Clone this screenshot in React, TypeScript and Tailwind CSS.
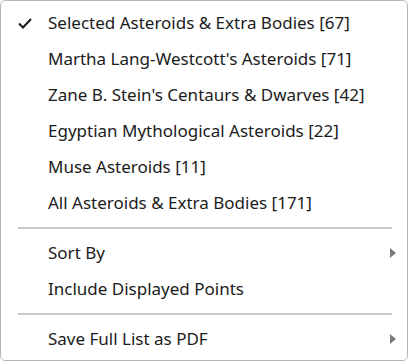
import React from 'react'

const items = [
  'Selected Asteroids & Extra Bodies [67]',
  "Martha Lang-Westcott's Asteroids [71]",
  "Zane B. Stein's Centaurs & Dwarves [42]",
  'Egyptian Mythological Asteroids [22]',
  'Muse Asteroids [11]',
  'All Asteroids & Extra Bodies [171]',
]

const Check = () => (
  <svg width="16" height="16" viewBox="0 0 16 16" className="text-[#1b1b1b]">
    <path d="M2 8.5 L6 12.5 L14 4" fill="none" stroke="currentColor" strokeWidth="2" />
  </svg>
)

const Arrow = () => (
  <svg width="6" height="10" viewBox="0 0 6 10">
    <path d="M0 0 L6 5 L0 10 Z" fill="#7a7a7a" />
  </svg>
)

interface RowProps {
  label: string
  checked?: boolean
  submenu?: boolean
}

const Row = ({ label, checked, submenu }: RowProps) => (
  <div className="flex items-center h-[36px]">
    <div className="w-[47px] pl-[16px] flex items-center">{checked && <Check />}</div>
    <span className="flex-1">{label}</span>
    <div className="w-[17px] flex items-center">{submenu && <Arrow />}</div>
  </div>
)

const Sep = () => (
  <div className="py-[6px] pl-[17px] pr-[15px]">
    <div className="h-[2px] bg-[#c9c9c9]" />
  </div>
)

export default function App() {
  return (
    <div className="w-[408px] h-[361px] bg-white border border-[#b5b5b5] rounded-[5px] pt-[4px] text-[17px] text-[#1b1b1b]" style={{ fontFamily: '"Noto Sans", "Open Sans", sans-serif' }}>
      {items.map((t, i) => (
        <Row key={t} label={t} checked={i === 0} />
      ))}
      <Sep />
      <Row label="Sort By" submenu />
      <Row label="Include Displayed Points" />
      <Sep />
      <Row label="Save Full List as PDF" submenu />
    </div>
  )
}
